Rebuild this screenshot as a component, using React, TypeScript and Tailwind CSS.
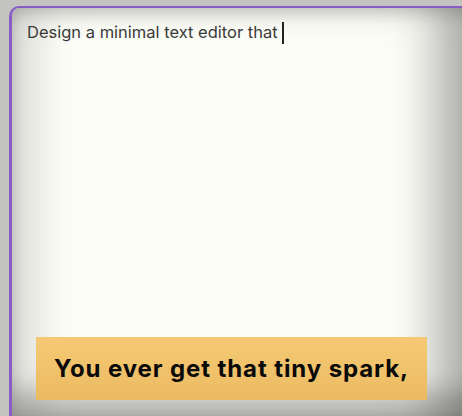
import React from "react";

export default function App() {
  return (
    <div className="w-[462px] h-[416px] overflow-hidden bg-[#c3c3c0] pt-[6px] pl-[9px]">
      <div className="relative w-[470px] h-[410px] rounded-tl-[10px] border-l-[3px] border-t-[2px] border-[#8a5cc6] bg-[#fcfdf7] shadow-[inset_0_6px_14px_rgba(0,0,0,0.12),inset_36px_0_40px_-12px_rgba(0,0,0,0.14),inset_-60px_0_50px_-20px_rgba(0,0,0,0.35),inset_0_-36px_26px_-10px_rgba(0,0,0,0.22)]">
        <div className="flex flex-col h-full">
          <div className="pl-[15px] pt-[13px] flex items-center h-[36px]">
            <span
              className="text-[16.5px] text-[#3a3a3a] leading-none"
              style={{ fontFamily: "Inter, 'Noto Sans', sans-serif" }}
            >
              Design a minimal text editor that
            </span>
            <span className="ml-[4px] w-[2px] h-[22px] bg-[#222]"></span>
          </div>
          <div className="flex-1"></div>
          <div className="pl-[24px] pb-[16px]">
            <div className="w-[391px] h-[63px] flex items-center justify-center bg-gradient-to-b from-[#f5c974] to-[#ebbb62]">
              <span
                className="text-[24px] font-bold text-[#0a0a0a] tracking-[0.9px]"
                style={{ fontFamily: "Inter, 'Noto Sans', sans-serif" }}
              >
                You ever get that tiny spark,
              </span>
            </div>
          </div>
        </div>
      </div>
    </div>
  );
}
